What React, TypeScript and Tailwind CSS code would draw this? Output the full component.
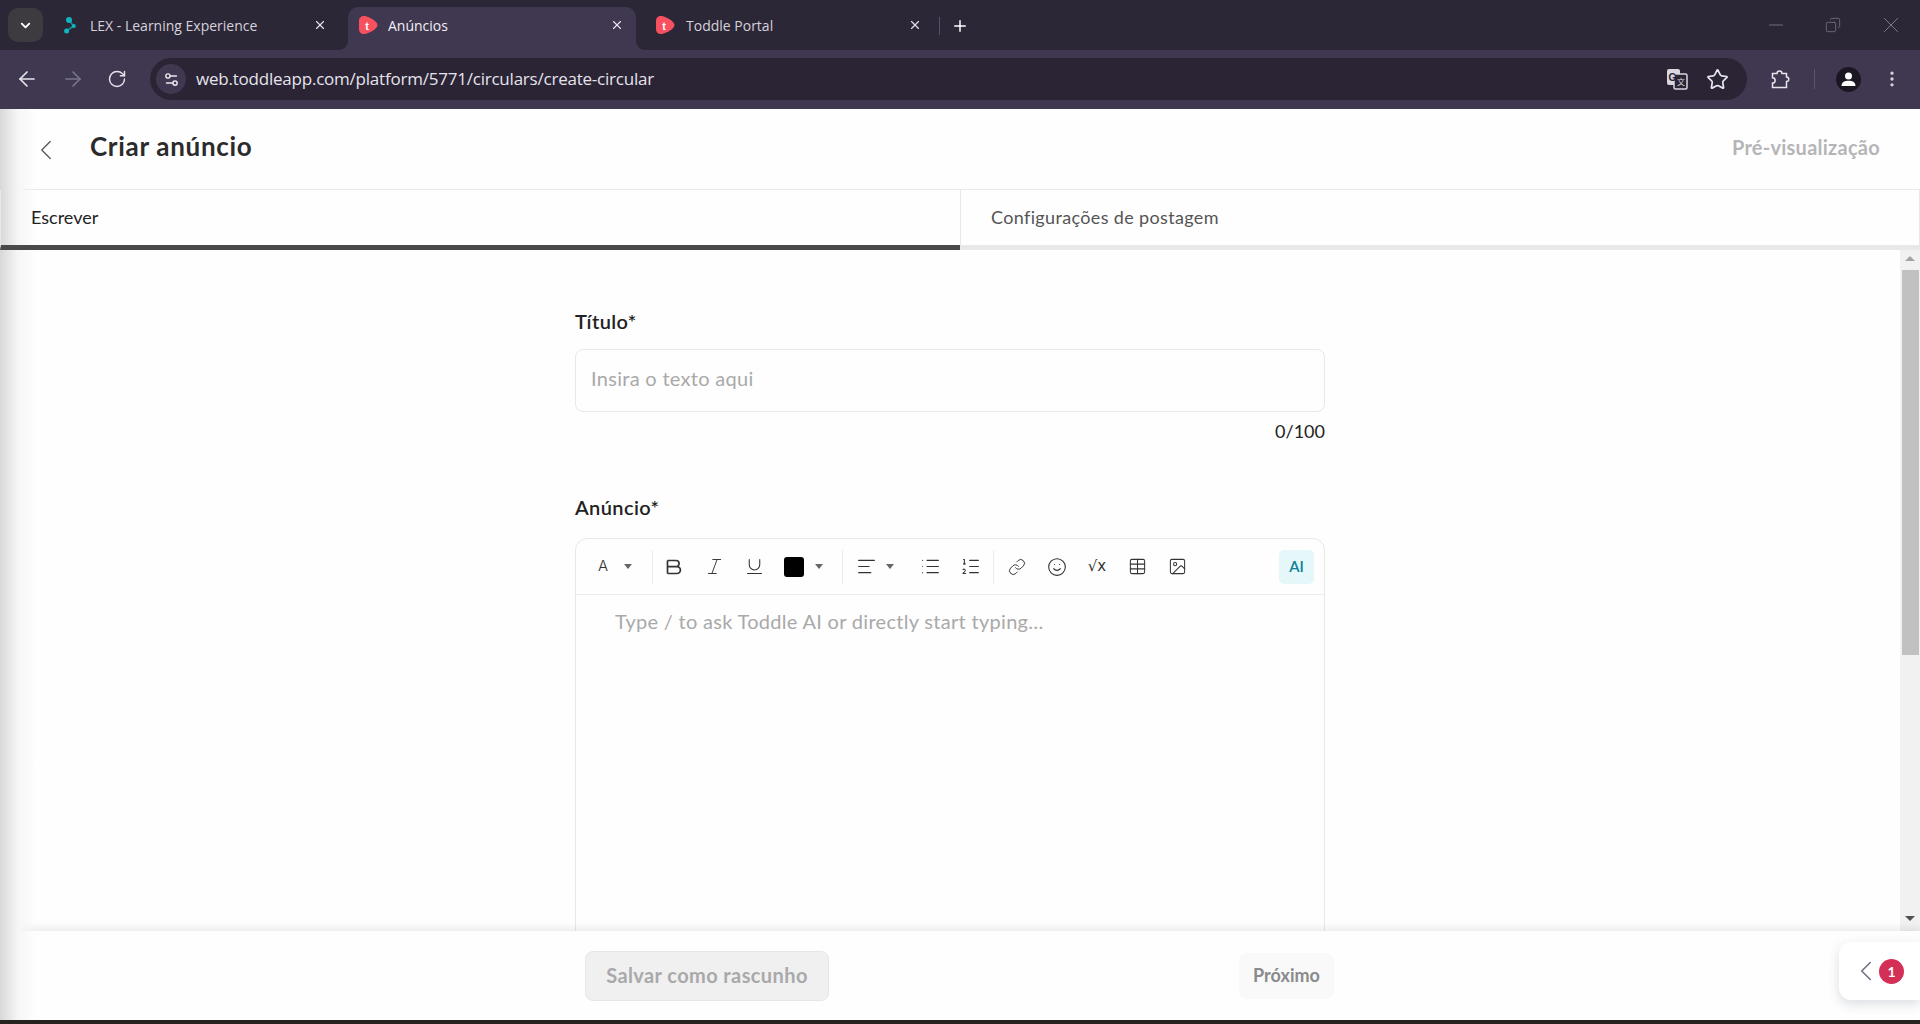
import {
  AlignLeft,
  ArrowLeft,
  ArrowRight,
  ChevronDown,
  ChevronLeft,
  Copy,
  Image,
  Italic,
  Link,
  List,
  ListOrdered,
  Minus,
  MoreVertical,
  Plus,
  RotateCw,
  Settings2,
  Smile,
  Star,
  Table,
  Underline,
  X,
} from "lucide-react";

const ToddleLogo = () => (
  <svg width="20" height="20" viewBox="0 0 20 20" className="shrink-0">
    <path d="M6 1 C3 1 1 3 1 6 L1 14 C1 17.500 3.500 19.500 7 19 C11 18.300 19.500 14 19.500 10 C19.500 6.500 11.500 2 8 1.300 C7.300 1.100 6.600 1 6 1 Z" fill="#f7505f" />
    <text x="9" y="14.500" fontSize="11" fontWeight="700" fill="#fff" textAnchor="middle" fontFamily="Liberation Sans, sans-serif">
      t
    </text>
  </svg>
);

const LexLogo = () => (
  <svg width="12" height="17" viewBox="0 0 12 17" className="shrink-0">
    <path d="M5 3 L9.500 9 L2.500 14" fill="none" stroke="#0f8f9b" strokeWidth="1.600" />
    <circle cx="5" cy="3" r="3" fill="#11b5bf" />
    <circle cx="9.800" cy="9" r="2" fill="#11b5bf" />
    <circle cx="2.600" cy="14" r="2.500" fill="#11b5bf" />
  </svg>
);

const BrowserChrome = () => (
  <div className="font-['Open_Sans',sans-serif]">
    <div className="flex h-[50px] items-end bg-[#2c2736]">
      <div className="mb-[8px] ml-[8px] flex h-[34px] w-[35px] items-center justify-center rounded-[10px] bg-[#3d3a40]">
        <ChevronDown size={15} strokeWidth={3} className="text-white" />
      </div>
      <div className="ml-[21px] flex h-[43px] w-[284px] items-center pb-[7px] pr-[21px] text-[#d5d1dc]">
        <LexLogo />
        <span className="ml-[14px] flex-1 truncate text-[14px]">LEX - Learning Experience</span>
        <X size={14} strokeWidth={2} className="text-[#e4e1ea]" />
      </div>
      <div className="relative flex h-[43px] w-[288px] items-center rounded-t-[10px] bg-[#3f3850] pb-[7px] pl-[10px] pr-[12px] text-[#f1eff5]">
        <ToddleLogo />
        <span className="ml-[10px] flex-1 truncate text-[14px]">Anúncios</span>
        <X size={14} strokeWidth={2} className="text-[#e4e1ea]" />
        <span className="absolute bottom-0 left-[-10px] h-[10px] w-[10px] bg-[radial-gradient(circle_at_0_0,transparent_10px,#3f3850_10.500px)]" />
        <span className="absolute bottom-0 right-[-10px] h-[10px] w-[10px] bg-[radial-gradient(circle_at_100%_0,transparent_10px,#3f3850_10.500px)]" />
      </div>
      <div className="flex h-[43px] w-[298px] items-center pb-[7px] pl-[19px] pr-[12px] text-[#d5d1dc]">
        <ToddleLogo />
        <span className="ml-[11px] flex-1 truncate text-[14px]">Toddle Portal</span>
        <X size={14} strokeWidth={2} className="text-[#e4e1ea]" />
      </div>
      <div className="mb-[15px] ml-[5px] h-[18px] w-px bg-[#57506a]" />
      <div className="mb-[15px] ml-[11px] text-white">
        <Plus size={18} strokeWidth={2} />
      </div>
      <div className="flex-1" />
      <div className="flex h-full items-center pb-[1px] text-[#8c8896]">
        <Minus size={22} strokeWidth={0.8} className="mr-[38px]" />
        <Copy size={16} strokeWidth={1} className="mr-[37px] -scale-x-100" />
        <X size={26} strokeWidth={0.8} className="mr-[16px]" />
      </div>
    </div>
    <div className="flex h-[59px] items-center bg-[#3f3850] pb-px">
      <ArrowLeft size={24} strokeWidth={1.700} className="ml-[15px] text-[#e7e4ec]" />
      <ArrowRight size={24} strokeWidth={1.700} className="ml-[22px] text-[#79748a]" />
      <RotateCw size={20} strokeWidth={1.700} className="ml-[22px] text-[#e7e4ec]" />
      <div className="ml-[23px] flex h-[42px] w-[1597px] items-center rounded-full bg-[#2a2435]">
        <div className="ml-[6px] flex h-[30px] w-[30px] items-center justify-center rounded-full bg-[#3f3850]">
          <Settings2 size={17} className="text-[#ece9f1]" />
        </div>
        <span className="ml-[10px] flex-1 text-[17px] tracking-[-0.22px] text-[#e6e3eb]">
          web.toddleapp.com/platform/5771/circulars/create-circular
        </span>
        <svg width="22" height="22" viewBox="0 0 22 22" className="mr-[18px]">
          <rect x="1" y="1" width="13" height="16" rx="2" fill="#d9d6de" />
          <rect x="8" y="6" width="13" height="15" rx="1.500" fill="#2a2435" stroke="#d9d6de" strokeWidth="1.500" />
          <text x="6.500" y="13" fontSize="10" fontWeight="700" fill="#2a2435" textAnchor="middle" fontFamily="Liberation Sans, sans-serif">
            G
          </text>
          <text x="15" y="17" fontSize="8" fill="#d9d6de" textAnchor="middle" fontFamily="Noto Sans CJK SC, sans-serif">
            文
          </text>
        </svg>
        <Star size={23} strokeWidth={1.800} className="mr-[18px] text-[#e7e4ec]" />
      </div>
      <svg width="20" height="20" viewBox="0 0 20 20" fill="none" stroke="#e7e4ec" strokeWidth="1.500" className="ml-[23px]">
        <path d="M2.500 4.500 H7 C7 1 12 1 12 4.500 H16.500 V8 C19.500 8 19.500 12.500 16.500 12.500 V18.500 H2.500 V14 C6 14 6 8.800 2.500 8.800 Z" />
      </svg>
      <div className="ml-[24px] h-[20px] w-px bg-[#5b5470]" />
      <div className="ml-[21px] flex h-[25px] w-[25px] items-center justify-center rounded-full bg-[#1b1622]">
        <svg width="17" height="17" viewBox="0 0 17 17">
          <circle cx="8.500" cy="5" r="3.500" fill="#fff" />
          <path d="M1.500 15 C1.500 11 5 9.800 8.500 9.800 C12 9.800 15.500 11 15.500 15 Z" fill="#fff" />
        </svg>
      </div>
      <MoreVertical size={20} className="ml-[21px] text-[#d6d2dc]" />
    </div>
  </div>
);

const Caret = ({ className = "" }: { className?: string }) => (
  <span className={`h-0 w-0 border-x-[4px] border-t-[5px] border-x-transparent border-t-[#666] ${className}`} />
);

const Sep = ({ className = "" }: { className?: string }) => <span className={`block h-[34px] w-px bg-[#ececec] ${className}`} />;

const ToolCell = ({ children }: { children: React.ReactNode }) => (
  <span className="flex h-[34px] w-10 items-center justify-center text-[#333]">{children}</span>
);

const EditorToolbar = () => (
  <div className="flex h-[56px] items-center border-b border-[#ececec] pl-[1px] pr-[10px]">
    <span className="flex w-[75px] items-center pl-[21px] text-[#333]">
      <span className="w-[26px] font-['Inter',sans-serif] text-[15px] font-light">A</span>
      <Caret />
    </span>
    <Sep />
    <span className="ml-[1px] flex items-center">
      <ToolCell>
        <svg width="18" height="18" viewBox="0 0 18 18" fill="none" stroke="#333" strokeWidth="1.700">
          <path d="M2.500 2.500 V15.500 M2.500 2.500 H11 A3.100 3.100 0 0 1 11 8.700 H2.500 M11 8.700 H12 A3.400 3.400 0 0 1 12 15.500 H2.500" />
        </svg>
      </ToolCell>
      <ToolCell>
        <Italic size={21} strokeWidth={1.100} />
      </ToolCell>
      <ToolCell>
        <Underline size={21} strokeWidth={1.200} />
      </ToolCell>
    </span>
    <span className="ml-[10px] h-5 w-5 rounded-[3px] bg-black" />
    <Caret className="ml-[11px]" />
    <Sep className="ml-[19px]" />
    <span className="ml-[13px] flex w-[30px] items-center">
      <AlignLeft size={21} strokeWidth={1.200} className="text-[#333]" />
    </span>
    <Caret />
    <span className="ml-[16px] flex items-center">
      <ToolCell>
        <List size={21} strokeWidth={1.200} />
      </ToolCell>
      <ToolCell>
        <ListOrdered size={21} strokeWidth={1.200} />
      </ToolCell>
    </span>
    <Sep className="ml-[3px]" />
    <span className="ml-[3px] flex items-center">
      <ToolCell>
        <Link size={18} strokeWidth={1.300} />
      </ToolCell>
      <ToolCell>
        <Smile size={20} strokeWidth={1.300} />
      </ToolCell>
      <ToolCell>
        <span className="font-['DejaVu_Sans',sans-serif] text-[15px]">√x</span>
      </ToolCell>
      <ToolCell>
        <Table size={19} strokeWidth={1.300} />
      </ToolCell>
      <ToolCell>
        <Image size={19} strokeWidth={1.300} />
      </ToolCell>
    </span>
    <span className="ml-auto flex h-[34px] w-[35px] items-center justify-center rounded-[5px] bg-[#e6f7f9] font-['Lato',sans-serif] text-[15px] font-semibold text-[#0a7f97]">
      AI
    </span>
  </div>
);

const Scrollbar = () => (
  <div className="flex w-5 shrink-0 flex-col items-center bg-[#f1f1f1] py-[6px]">
    <span className="h-0 w-0 border-x-[5px] border-b-[5px] border-x-transparent border-b-[#a3a3a3]" />
    <span className="mt-[9px] h-[385px] w-[17px] bg-[#c1c1c1]" />
    <span className="flex-1" />
    <span className="mb-[4px] h-0 w-0 border-x-[5px] border-t-[5px] border-x-transparent border-t-[#505050]" />
  </div>
);

const App = () => {
  return (
    <div className="relative flex h-[1024px] w-[1920px] flex-col overflow-hidden bg-[#fefefe] font-['Lato',sans-serif] text-[#1f1f1f]">
      <BrowserChrome />

      <div className="flex h-[81px] shrink-0 items-center border-b border-[#e8e8e8]">
        <ChevronLeft size={34} strokeWidth={0.900} className="ml-[29px] mt-[2px] text-[#555]" />
        <h1 className="mb-[5px] ml-[27px] text-[26px] font-bold tracking-[0.7px] text-[#2b2b2b]">Criar anúncio</h1>
        <span className="mb-[5px] ml-auto mr-[40px] text-[20px] font-bold tracking-[0.25px] text-[#b5b5b8]">Pré-visualização</span>
      </div>

      <div className="relative z-10 flex h-[60px] shrink-0">
        <div className="flex w-[960px] items-center border-b-[5px] border-l border-b-[#4a4a4a] border-l-[#e8e8e8] pl-[30px] text-[18px] text-[#222]">
          Escrever
        </div>
        <div className="flex w-[960px] items-center border-b-[5px] border-l border-r border-b-[#e8e8e8] border-l-[#e8e8e8] border-r-[#e8e8e8] pl-[30px] text-[18px] tracking-[0.35px] text-[#555]">
          Configurações de postagem
        </div>
      </div>

      <div className="flex min-h-0 flex-1">
        <div className="flex-1 overflow-hidden">
          <div className="mx-auto w-[750px] pt-[59px]">
            <label className="block text-[20px] font-semibold leading-6 tracking-[0.4px] text-[#222]">Título*</label>
            <div className="mt-[16px] flex h-[63px] items-center rounded-[8px] border border-[#e8e8e8] pb-[5px] pl-[15px] text-[20px] tracking-[0.3px] text-[#a9a9a9]">
              Insira o texto aqui
            </div>
            <div className="mt-[9px] text-right text-[18px] leading-5 text-[#222]">0/100</div>
            <label className="mt-[54px] block text-[20px] font-semibold leading-6 tracking-[0.4px] text-[#222]">Anúncio*</label>
            <div className="mt-[19px] h-[500px] rounded-t-[12px] border border-[#e8e8e8]">
              <EditorToolbar />
              <div className="pl-[39px] pt-[11px] text-[20px] tracking-[0.3px] text-[#a9a9a9]">Type / to ask Toddle AI or directly start typing…</div>
            </div>
          </div>
        </div>
        <Scrollbar />
      </div>

      <div className="relative flex h-[89px] shrink-0 items-center bg-[#fefefe] shadow-[0_-3px_8px_rgba(0,0,0,0.08)]">
        <div className="ml-[585px] flex h-[50px] w-[244px] items-center justify-center rounded-[8px] border border-[#e6e6e6] bg-[#f0f0f0] pb-[2px] text-[20px] font-bold tracking-[0.4px] text-[#a9a9ab]">
          Salvar como rascunho
        </div>
        <div className="ml-[410px] flex h-[46px] w-[95px] items-center justify-center rounded-[8px] bg-[#f9f9fa] text-[18px] font-bold text-[#8a8a8c]">
          Próximo
        </div>
      </div>

      <div className="relative h-1 shrink-0 bg-[#26231f]" />

      <div className="absolute right-0 top-[942px] flex h-[58px] w-[81px] items-center rounded-l-[12px] bg-white pl-[10px] shadow-[0_4px_12px_rgba(60,70,100,0.18)]">
        <ChevronLeft size={34} strokeWidth={1.100} className="text-[#6b7080]" />
        <span className="-ml-[4px] flex h-[25px] w-[25px] items-center justify-center rounded-full bg-[#d42f55] text-[14px] font-bold text-white">1</span>
      </div>

      <div className="pointer-events-none absolute bottom-1 left-0 top-[109px] w-9 bg-gradient-to-r from-[#d8d8d8] via-[#f6f6f6] to-transparent" />
    </div>
  );
};

export default App;
